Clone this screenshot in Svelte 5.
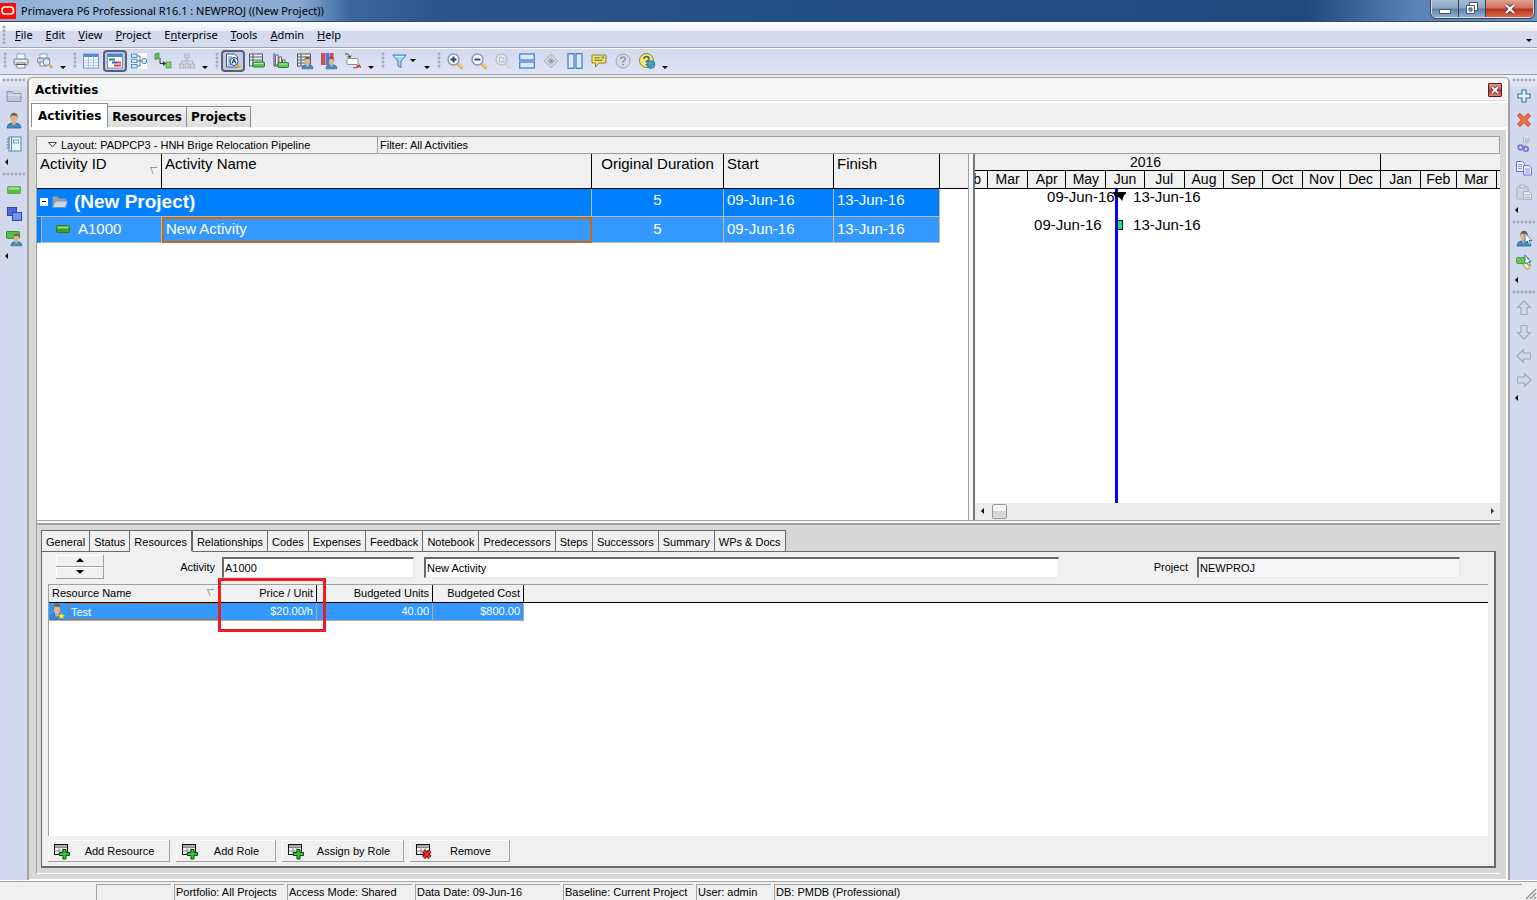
<script>
  const person =
    '<path d="M1 16q0-4 4-5l3 1 3-1q4 1 4 5z" fill="#3f8ec4" stroke="#2468a0" stroke-width=".8"/><path d="M6 9h4v3l-2 1.500-2-1.500z" fill="#d9a878"/><ellipse cx="8" cy="6" rx="3.300" ry="4.300" fill="#e2b48a"/><path d="M4.500 7Q3.500 1 8 .800 12.500 1 11.500 7q0-3-1.500-3.500-2 .500-4 0Q4.500 4 4.500 7z" fill="#6b5f50"/>';
  const smallPerson = `<g transform="translate(4 3) scale(.8)">${person}</g>`;
  const glass = (inner, rim, fill, handle) =>
    `<path d="M10.500 10.500l4.200 4.200" stroke="${handle}" stroke-width="3.200" stroke-linecap="round"/><path d="M10.500 9.700l4.500 4.500" stroke="#fff0c8" stroke-width=".8"/><circle cx="6.500" cy="6.500" r="5.500" fill="${fill}" stroke="${rim}" stroke-width="1.400"/>${inner}`;
  const arrowPath = 'M8 1l6.500 6.500H11V14.500H5V7.500H1.500z';
  const grayArrow = (deg) =>
    `<path transform="rotate(${deg} 8 8)" d="${arrowPath}" fill="#d3d8e4" stroke="#a3a9b9" stroke-width="1.100" stroke-linejoin="round"/>`;
  const greenBar = (x, y, w) =>
    `<rect x="${x}" y="${y}" width="${w}" height="5" rx="1" fill="#5fc552" stroke="#287c2c"/><path d="M${x + 1} ${y + 1.5}h${w - 2}" stroke="#b5f0a5"/>`;
  const pointer = '<path d="M9 3v10l2.300-2 1.700 4 1.700-.8-1.700-3.700h3z" fill="#fff" stroke="#2d6f96" stroke-width=".9"/>';
  const tableGlyph =
    '<rect x=".5" y="1.500" width="13" height="10" fill="#fff" stroke="#111"/><path d="M1 3h12" stroke="#aaa" stroke-width="2"/><path d="M1 4.500h12M1 8h12M5 4v7M9 4v7" stroke="#888"/>';

  const icons = {
    print:
      '<path d="M4 6V1h8v5" fill="#f7fbff" stroke="#7aa6d4"/><rect x="1" y="6" width="14" height="6" rx="1.500" fill="#d2d5da" stroke="#777c86"/><path d="M2 8h12" stroke="#fff"/><path d="M4 10h8v5H4z" fill="#fff" stroke="#7f8793"/><path d="M3 11.500h10" stroke="#555"/>',
    preview:
      '<path d="M3 5V1h7v4" fill="#f7fbff" stroke="#7aa6d4"/><rect x=".5" y="5" width="12" height="5" rx="1.500" fill="#d2d5da" stroke="#777c86"/><path d="M3 9h7v4H3z" fill="#fff" stroke="#7f8793"/><circle cx="9.500" cy="9" r="3.500" fill="#d9efff" stroke="#7b8794"/><path d="M12.500 12l2.500 3" stroke="#dda03f" stroke-width="2.200"/>',
    grid:
      '<rect x=".5" y="1" width="15" height="14" fill="#fff" stroke="#6c94cf"/><path d="M1 2.500h14" stroke="#5b8bd4" stroke-width="3"/><path d="M1 7h14M1 9.700h14M1 12.300h14M5.500 4v11M10.500 4v11" stroke="#a9c3e8"/>',
    gantt:
      '<rect x=".5" y="1" width="15" height="14" fill="#fff" stroke="#6c94cf"/><path d="M1 2.500h14" stroke="#4f82d0" stroke-width="3"/><path d="M2 6.500h6" stroke="#1d8f32" stroke-width="2"/><path d="M5 9.500h5" stroke="#2d55c4" stroke-width="2"/><path d="M10 9.500h4" stroke="#e34234" stroke-width="2"/><path d="M7 12.500h7" stroke="#e34234" stroke-width="2"/>',
    network:
      '<rect width="16" height="16" fill="#fff"/><path d="M6 3h3v10H6M6 8h5" fill="none" stroke="#5b7181"/><rect x=".5" y="1" width="5.500" height="3.500" fill="#cfe9fb" stroke="#4f90b8"/><rect x=".5" y="6.200" width="5.500" height="3.500" fill="#cfe9fb" stroke="#4f90b8"/><rect x=".5" y="11.500" width="5.500" height="3.500" fill="#cfe9fb" stroke="#4f90b8"/><rect x="11" y="5.500" width="4.500" height="5" rx="1.500" fill="#cfe9fb" stroke="#4f90b8"/>',
    trace:
      '<path d="M5 5v5.500h4" fill="none" stroke="#333"/><path d="M8 8l3 2.500-3 2.500z" fill="#333"/><path d="M0 1l4-1v5.500l-4 1z" fill="#5ec24f" stroke="#2c8a33" stroke-width=".7"/><rect x="11" y="9" width="5" height="6" fill="#7ad768" stroke="#2c8a33" stroke-width=".7"/>',
    org:
      '<g fill="#d5d8e1" stroke="#b1b5c0"><path d="M8 5v3M2.500 11V8h11v3M8 8v3" fill="none"/><rect x="6" y="1" width="4" height="4"/><rect x=".5" y="11" width="4" height="4"/><rect x="6" y="11" width="4" height="4"/><rect x="11.500" y="11" width="4" height="4"/></g>',
    find:
      '<path d="M1.500 1h8l3 3v10h-11z" fill="#fff" stroke="#2c5a92"/><path d="M3 4h4M3 6h3M3 8h2M3 10h2M3 12h3" stroke="#4e82bd"/><circle cx="9" cy="8.500" r="4" fill="#eaf5ff" stroke="#26496f"/><path d="M7 10.500l2-4.500 2 4.500M7.700 9h2.600" fill="none" stroke="#234a80" stroke-width="1.100"/><path d="M12 11.500l3 3.200" stroke="#e9a52a" stroke-width="2.600"/>',
    detail:
      '<rect x=".5" y="1" width="13" height="12" fill="#eef0f4" stroke="#555b64"/><path d="M1 4h12M1 7h12M4 1v12" stroke="#555b64"/>' + greenBar(4, 9, 11.5),
    histogram:
      '<path d="M1 0v13h5" fill="none" stroke="#444a55"/><rect x="2.500" y="2" width="2.500" height="10" fill="#fff" stroke="#5c6270"/><rect x="6" y="4" width="2.500" height="8" fill="#fff" stroke="#5c6270"/><rect x="9.500" y="7" width="2.500" height="5" fill="#fff" stroke="#5c6270"/>' + greenBar(5, 9.5, 10.5),
    resTable:
      '<rect x=".5" y="1" width="13" height="12" fill="#eef0f4" stroke="#555b64"/><path d="M1 4h12M1 7h12M1 10h12M4 1v12" stroke="#555b64"/>' + smallPerson,
    resChart:
      '<rect x="0" y="0" width="4" height="12" fill="#d54b4b"/><rect x="4.500" y="0" width="4" height="12" fill="#5277d8"/><rect x="9" y="0" width="3.500" height="9" fill="#d54b4b"/>' + smallPerson,
    relation:
      '<path d="M0 1q4-1 4.500 3M2.500 3l2 2 1.500-2.500" fill="none" stroke="#333"/><rect x="2" y="5.500" width="11" height="6" rx="1" fill="#fff" stroke="#8a8f98"/><path d="M8 14.500q5 1 6-2M11.500 13.500l3-1.500 1 3" fill="none" stroke="#e03030" stroke-width="1.200"/>',
    filter: '<path d="M.8 2h13.400L9 8v6.500l-3-1.500V8z" fill="#a9d3f5" stroke="#3f7db8" stroke-linejoin="round"/><path d="M3 3.500h9" stroke="#e3f4ff"/>',
    zoomIn: glass('<path d="M3.500 6.500h6M6.500 3.500v6" stroke="#243c86" stroke-width="1.800"/>', '#8e98a8', '#eef8ff', '#e8ad55'),
    zoomOut: glass('<path d="M3.500 6.500h6" stroke="#243c86" stroke-width="1.800"/>', '#8e98a8', '#eef8ff', '#e8ad55'),
    zoomFit: glass('<path d="M4.500 4.500h3l1.500 1.500v3h-4.500z" fill="none" stroke="#b3b7c2"/>', '#bcc0ca', '#e2e5ee', '#cfd2da'),
    rows:
      '<g fill="#d7ecfc" stroke="#3f78cf" stroke-width="1.200"><rect x=".7" y="1" width="14.600" height="6"/><rect x=".7" y="9" width="14.600" height="6"/></g>',
    columns:
      '<g fill="#d7ecfc" stroke="#3f78cf" stroke-width="1.200"><rect x="1" y=".7" width="6" height="14.600"/><rect x="9" y=".7" width="6" height="14.600"/></g>',
    diamond:
      '<path d="M8 1l7 7-7 7-7-7z" fill="#d0d4df" stroke="#acb1be"/><path d="M8 4.500v7M4.500 8h7M6 6l4 4M10 6l-4 4" stroke="#8f95a3" stroke-width=".9"/>',
    note:
      '<path d="M1 2h14v8H8l-3.500 4V10H1z" fill="#f1e65a" stroke="#8d8330"/><path d="M3.500 4.800h5M3.500 7.300h8" stroke="#6a7f70" stroke-width="1.200"/><rect x="10.500" y="3.500" width="2.500" height="2" fill="#5d82c0"/>',
    help: '<circle cx="8" cy="8" r="7" fill="#d9dce6" stroke="#a1a6b2"/><path d="M5.700 6.300q0-2.300 2.300-2.300t2.300 2q0 1.200-2.300 2.500v1.200M8 11v1.500" fill="none" stroke="#8d93a2" stroke-width="1.500"/>',
    helpWeb:
      '<circle cx="7.500" cy="7.500" r="7" fill="#f7ee62" stroke="#7e7b43"/><path d="M5 6q0-2.500 2.500-2.500T10 6q0 1.200-2.500 2.300v1.500M7.500 11v1.500" fill="none" stroke="#3a57b0" stroke-width="1.500"/><circle cx="12" cy="11.500" r="4" fill="#3f8fd6" stroke="#2b66a5" stroke-width=".6"/><path d="M9.500 9.500l3-1 .5 2-2 1.500zM12 13l2.500-1.500 1 1-2 2.500z" fill="#4fc05a"/>',
    folder: '<path d="M1 13.500V3.500h5l1.500 2h7.500v8z" fill="#bfcbdc" stroke="#8393ad"/><path d="M1.500 7h13" stroke="#e9eff7"/>',
    folderOpen:
      '<path d="M.5 12.500V2.500h5l1.500 2h7v3" fill="#8ba3bd" stroke="#6b86a3"/><path d="M.5 13.500l2.500-6.500h12.500l-2 6.500z" fill="#c9d7e6" stroke="#7690ab"/>',
    person,
    book:
      '<rect x="3" y="1" width="12" height="14" fill="#e8f3fb" stroke="#4d8cba"/><path d="M5.500 1v14" stroke="#4d8cba"/><rect x="7.500" y="4" width="5" height="3" fill="#fff" stroke="#4d8cba" stroke-width=".8"/><path d="M.5 3h3.500M.5 6h3.500M.5 9h3.500M.5 12h3.500" stroke="#5f7f99" stroke-width="1.200"/>',
    bar: '<rect x="1.500" y="4.500" width="13" height="7" rx="1" fill="#55bd3f" stroke="#66a565"/><path d="M2.500 6.500h11" stroke="#a6e88f" stroke-width="2"/>',
    task: '<rect x="1.500" y="4.500" width="13" height="7" rx="1" fill="#3f9f2b" stroke="#2a7a1c"/><path d="M2.500 6.500h11" stroke="#8ddc6c" stroke-width="2"/>',
    squares: '<rect x="1.500" y="1.500" width="9" height="8" fill="#5266e0" stroke="#3346b8"/><rect x="6.500" y="6.500" width="9" height="8" fill="#6f97f0" stroke="#3346b8"/>',
    barPerson: `<rect x=".5" y="1.500" width="13" height="7" rx="1" fill="#55bd3f" stroke="#3c8a39"/>${smallPerson}`,
    add: '<path d="M6 2h4v4h4v4h-4v4H6v-4H2V6h4z" fill="#e2f4fb" stroke="#417e99" stroke-width="1.200"/>',
    del: '<path d="M1.500 3.500l2.500-2 4 4 4-4 2.500 2.500-4 4 4 4-2.500 2.500-4-4-4 4-2.500-2.500 4-4z" fill="#f2714f" stroke="#c13a20"/>',
    cut:
      '<path d="M8 1l1 9M13 2.500L7.500 10" stroke="#a2a6b0" stroke-width="2.200"/><path d="M8 1l1 8M12.700 3L8 9.500" stroke="#f4f4f6" stroke-width=".8"/><circle cx="4.500" cy="11.500" r="2.300" fill="none" stroke="#7672dd" stroke-width="1.700"/><circle cx="10" cy="13" r="2.200" fill="none" stroke="#7672dd" stroke-width="1.700"/>',
    copy:
      '<g fill="#edf0ff" stroke="#6c74dc"><path d="M.5 1.500h6l2 2v8h-8z"/><path d="M7.500 5.500h5.500l2.500 2.500v7h-8z"/></g><path d="M2 4.500h4M2 6.500h4M2 8.500h4M9 9h5M9 11h5M9 13h5" stroke="#8e97e8"/>',
    paste:
      '<rect x="1" y="2.500" width="11" height="12.500" rx="1" fill="#ced3df" stroke="#a9afbd"/><rect x="4" y="1" width="5" height="3" fill="#dfe2ea" stroke="#a9afbd"/><path d="M7.500 7.500h5.500l2.500 2.500v5.500h-8z" fill="#e5e8f0" stroke="#a9afbd"/><path d="M9 11h5M9 13.500h5" stroke="#a9afbd"/>',
    personPick: person + pointer,
    barPick: '<rect x=".5" y="3.500" width="12" height="6" rx="1" fill="#68c653" stroke="#4c9b45"/><path d="M8 8.500h4l3 3-3.500 4-4.500-4z" fill="#f6ef84" stroke="#9c9650"/><path d="M9 1v9l2-1.500 1.500 3 1.500-.7-1.500-3h2.500z" fill="#fff" stroke="#2d6f96" stroke-width=".9"/>',
    up: grayArrow(0),
    down: grayArrow(180),
    left: grayArrow(270),
    right: grayArrow(90),
    tableAdd: tableGlyph + '<path d="M9 6.500h3v3h3.500v3H12V16H9v-3.500H5.500v-3H9z" fill="#36c436" stroke="#064d0a"/>',
    tableDel: tableGlyph + '<path d="M7.500 8l6.500 6.500M14 8l-6.500 6.500" stroke="#5e0c0c" stroke-width="4"/><path d="M7.500 8l6.500 6.500M14 8l-6.500 6.500" stroke="#f03030" stroke-width="2.400"/>',
    personStar: person + '<path d="M12.500 9.500l1.200 2.200 2.300.3-1.700 1.700.4 2.300-2.200-1.100-2 1.100.3-2.300L9 12l2.300-.3z" fill="#ffe93b" stroke="#a98c10" stroke-width=".4"/>'
  };

  const menus = [
    ['', 'F', 'ile'], ['', 'E', 'dit'], ['', 'V', 'iew'], ['', 'P', 'roject'],
    ['E', 'n', 'terprise'], ['', 'T', 'ools'], ['', 'A', 'dmin'], ['', 'H', 'elp']
  ];
  const toolGroups = [
    ['print', 'preview'],
    ['grid', 'gantt', 'network', 'trace', 'org'],
    ['find', 'detail', 'histogram', 'resTable', 'resChart', 'relation'],
    ['filter'],
    ['zoomIn', 'zoomOut', 'zoomFit', 'rows', 'diamond', 'columns', 'note', 'help', 'helpWeb']
  ];
  const pressed = ['gantt', 'find'];
  const leftGroups = [['folder', 'person', 'book'], ['bar', 'squares', 'barPerson']];
  const rightGroups = [['add', 'del', 'cut', 'copy', 'paste'], ['personPick', 'barPick'], ['up', 'down', 'left', 'right']];

  const detailTabs = ['General', 'Status', 'Resources', 'Relationships', 'Codes', 'Expenses', 'Feedback', 'Notebook', 'Predecessors', 'Steps', 'Successors', 'Summary', 'WPs & Docs'];
  let activeTab = $state('Resources');
  let activityId = $state('A1000');
  let activityName = $state('New Activity');

  // The visible range opens in late February 2016; cells outside it carry no label.
  const dayWidth = 1.2843;
  const months = [
    ['', 31], ['Feb', 29], ['Mar', 31], ['Apr', 30], ['May', 31], ['Jun', 30], ['Jul', 31], ['Aug', 31],
    ['Sep', 30], ['Oct', 31], ['Nov', 30], ['Dec', 31], ['Jan', 31], ['Feb', 28], ['Mar', 31], ['', 30]
  ];
  const commands = [
    ['Add Resource', 'tableAdd', true], ['Add Role', 'tableAdd', false],
    ['Assign by Role', 'tableAdd', true], ['Remove', 'tableDel', false]
  ];
</script>

{#snippet icon(name)}
  <svg class="icon" viewBox="0 0 16 16" width="16" height="16" fill="none" aria-hidden="true">{@html icons[name]}</svg>
{/snippet}

{#snippet sideBar(groups, label)}
  <nav class="side" aria-label={label}>
    {#each groups as group}
      <div class="side-group">
        <span class="grip-h"></span>
        {#each group as name}
          <button class="tool" aria-label={name}>{@render icon(name)}</button>
        {/each}
        <button class="more-v" aria-label="More"><span class="tri-left"></span></button>
      </div>
    {/each}
  </nav>
{/snippet}

<div class="app">
  <header class="titlebar">
    <svg class="logo" viewBox="0 0 16 16" width="16" height="16" aria-hidden="true">
      <rect width="16" height="16" fill="#fb0d07" />
      <rect x="2" y="4" width="11.500" height="7" rx="3" fill="none" stroke="#fff" stroke-width="1.600" />
    </svg>
    <span class="title">Primavera P6 Professional R16.1 : NEWPROJ ((New Project))</span>
    <div class="window-buttons">
      <button aria-label="Minimize"><svg width="14" height="12"><rect x="1.500" y="6.500" width="11" height="4" fill="#fff" stroke="#46566c" /></svg></button>
      <button aria-label="Restore"><svg width="14" height="13"><path d="M4.500.5h8v8h-8z" fill="#fff" stroke="#46566c" /><path d="M1.500 3.500h8v8h-8z" fill="#fff" stroke="#46566c" /><path d="M4 6h3v3H4z" fill="#8ca4c0" stroke="#46566c" /></svg></button>
      <button class="close" aria-label="Close"><svg width="14" height="12"><path d="M3 2l8 8M11 2l-8 8" stroke="#5b3030" stroke-width="4" /><path d="M3 2l8 8M11 2l-8 8" stroke="#fff" stroke-width="2.400" /></svg></button>
    </div>
  </header>

  <nav class="menubar" aria-label="Menu">
    <span class="grip"></span>
    {#each menus as [pre, key, rest]}
      <button class="menu">{pre}<u>{key}</u>{rest}</button>
    {/each}
    <span class="tri menu-more"></span>
  </nav>

  <div class="toolbar">
    {#each toolGroups as group}
      <div class="tool-group">
        <span class="grip"></span>
        {#each group as name}
          <button class="tool" class:pressed={pressed.includes(name)} class:wide={name === 'filter'} aria-label={name}>
            {@render icon(name)}{#if name === 'filter'}<span class="tri"></span>{/if}
          </button>
        {/each}
        <button class="more" aria-label="More"><span class="tri"></span></button>
      </div>
    {/each}
  </div>

  <div class="workspace">
    {@render sideBar(leftGroups, 'Directory')}

    <main>
      <div class="heading">
        <h1>Activities</h1>
        <button class="close-view" aria-label="Close view"><svg width="8" height="8"><path d="M1 1l6 6M7 1l-6 6" stroke="#4a2a30" stroke-width="3" /><path d="M1 1l6 6M7 1l-6 6" stroke="#fff" stroke-width="1.800" /></svg></button>
      </div>
      <div class="view-tabs">
        <button class="current">Activities</button><button>Resources</button><button>Projects</button>
      </div>

      <div class="body">
        <section class="top-pane">
          <div class="layout-bar">
            <button class="layout-name">
              <svg width="9" height="6"><path d="M.5.5h8L4.500 5z" fill="#fff" stroke="#444" /></svg>
              Layout: PADPCP3 - HNH Brige Relocation Pipeline
            </button>
            <span>Filter: All Activities</span>
          </div>
          <div class="split">
            <div class="grid-pane">
              <table class="activities">
                <colgroup><col class="c-id" /><col class="c-name" /><col class="c-dur" /><col class="c-start" /><col class="c-fin" /><col /></colgroup>
                <thead>
                  <tr>
                    <th><div class="sortable"><span>Activity ID</span><svg width="8" height="8"><path d="M.5.5h7M.5.5l3 7" stroke="#999" fill="none" /><path d="M7.500.5l-4 7" stroke="#fff" /></svg></div></th>
                    <th>Activity Name</th><th class="center">Original Duration</th><th>Start</th><th>Finish</th><th></th>
                  </tr>
                </thead>
                <tbody>
                  <tr class="project">
                    <td colspan="2"><div class="cell"><span class="toggle"></span>{@render icon('folderOpen')}<b>(New Project)</b></div></td>
                    <td class="center">5</td><td>09-Jun-16</td><td>13-Jun-16</td><td class="blank"></td>
                  </tr>
                  <tr class="activity">
                    <td class="indent"><div class="cell">{@render icon('task')}<span>A1000</span></div></td>
                    <td class="focused">New Activity</td>
                    <td class="center">5</td><td>09-Jun-16</td><td>13-Jun-16</td><td class="blank"></td>
                  </tr>
                </tbody>
              </table>
            </div>
            <div class="gantt">
              <div class="timescale">
                <div class="track years">
                  <span style="width:{366 * dayWidth}px">2016</span><span style="width:{365 * dayWidth}px"></span>
                </div>
                <div class="track months">
                  {#each months as [name, days]}<span style="width:{days * dayWidth}px">{name}</span>{/each}
                </div>
              </div>
              <div class="canvas">
                <span class="date summary-start">09-Jun-16</span>
                <span class="date summary-finish">13-Jun-16</span>
                <span class="date task-start">09-Jun-16</span>
                <span class="date task-finish">13-Jun-16</span>
                <span class="data-line"></span>
                <svg class="summary" width="14" height="10"><path d="M0 0h13v2l-2 1-2 6-2-3-2-1H2z" fill="#000" /></svg>
                <span class="task"></span>
              </div>
              <div class="scroll">
                <span class="tri-left"></span><span class="thumb"></span><span class="tri-right"></span>
              </div>
            </div>
          </div>
        </section>

        <section class="details">
          <div class="detail-tabs">
            {#each detailTabs as tab}
              <button class:current={tab === activeTab} onclick={() => (activeTab = tab)}>{tab}</button>
            {/each}
          </div>
          <div class="detail-body">
            <div class="form">
              <div class="spin">
                <button aria-label="Previous"><span class="tri-up"></span></button>
                <button aria-label="Next"><span class="tri"></span></button>
              </div>
              <label for="activity-id">Activity</label>
              <input id="activity-id" class="f-id" bind:value={activityId} />
              <input class="f-name" aria-label="Activity name" bind:value={activityName} />
              <label for="project-id" class="l-project">Project</label>
              <input id="project-id" class="f-project" value="NEWPROJ" readonly />
            </div>
            <div class="resource-list">
              <table class="resources">
                <colgroup><col class="r-name" /><col class="r-price" /><col class="r-units" /><col class="r-cost" /><col /></colgroup>
                <thead>
                  <tr>
                    <th class="first"><div class="sortable"><span>Resource Name</span><svg width="8" height="8"><path d="M.5.5h7M.5.5l3 7" stroke="#999" fill="none" /><path d="M7.500.5l-4 7" stroke="#fff" /></svg></div></th>
                    <th class="num marked">Price / Unit<span class="marker"></span></th>
                    <th class="num">Budgeted Units</th><th class="num">Budgeted Cost</th><th class="rest"></th>
                  </tr>
                </thead>
                <tbody>
                  <tr>
                    <td class="first"><div class="res">{@render icon('personStar')}<span>Test</span></div></td>
                    <td class="num">$20.00/h</td><td class="num">40.00</td><td class="num">$800.00</td><td class="rest"></td>
                  </tr>
                </tbody>
              </table>
            </div>
            <div class="commands">
              {#each commands as [label, glyph, large]}
                <button class:large>{@render icon(glyph)}<span>{label}</span></button>
              {/each}
            </div>
          </div>
        </section>
      </div>
    </main>

    {@render sideBar(rightGroups, 'Edit')}
  </div>

  <footer>
    <span class="s-blank"></span>
    <span class="s-portfolio">Portfolio: All Projects</span>
    <span class="s-access">Access Mode: Shared</span>
    <span class="s-date">Data Date: 09-Jun-16</span>
    <span class="s-base">Baseline: Current Project</span>
    <span class="s-user">User: admin</span>
    <span class="s-db">DB: PMDB (Professional)</span>
    <svg class="resize" width="12" height="12"><path d="M11 1L1 11M11 5l-6 6M11 9l-2 2" stroke="#999" stroke-width="1.500" /></svg>
  </footer>
</div>

<style>
  :global(body) { margin: 0; }
  * { box-sizing: border-box; }
  button { border: 0; padding: 0; margin: 0; background: none; color: inherit; font: inherit; }
  .app { display: flex; flex-direction: column; min-height: 100vh; font: 11px/14px "Liberation Sans", Arial, sans-serif; color: #000; background: #f0f0f0; }
  .icon { display: block; flex: none; overflow: visible; }

  .tri, .tri-up { width: 0; height: 0; border: solid transparent; border-width: 3px 3px 0; border-top-color: #000; }
  .tri-up { border-width: 0 4px 4px; border-bottom-color: #000; }
  .tri-left { width: 0; height: 0; border: solid transparent; border-width: 3px 3px 3px 0; border-right-color: #000; }
  .tri-right { width: 0; height: 0; border: solid transparent; border-width: 3px 0 3px 3px; border-left-color: #333; }

  .titlebar { display: flex; align-items: center; height: 22px; padding-right: 3px; border-bottom: 1px solid #2b4a70;
    background: linear-gradient(90deg, #8fb0d5 0, #a0bcdc 120px, #86a8d0 300px, #3a679d 350px, #2b568c 440px, #235087 50%, #1f4a7c 85%, #5b83b3 92%, #6e93bf 100%); }
  .logo { flex: none; }
  .title { flex: 1; padding-left: 5px; font: 11px/20px "Noto Sans", "Segoe UI", sans-serif; white-space: nowrap; }
  .window-buttons { display: flex; align-self: flex-start; height: 18px; border: 1px solid #d3deea; border-top: 0; border-radius: 0 0 5px 5px; overflow: hidden; outline: 1px solid #33435a; }
  .window-buttons button { display: flex; align-items: center; justify-content: center; width: 27px; border-right: 1px solid #33435a; background: linear-gradient(#a8bdd5, #8aa5c4 48%, #5f7fa5 52%, #8fb0d2); }
  .window-buttons .close { width: 47px; border: 0; background: linear-gradient(#e0a091, #d0705b 48%, #b5311c 52%, #d9694a); }

  .menubar { display: flex; align-items: center; gap: 1px; height: 26px; padding-right: 5px; border-bottom: 1px solid #a0a3aa; background: linear-gradient(#fff, #e9edf8 35%, #d3d9ee 38%, #d7dcf0); font: 11px/16px "Noto Sans", "Segoe UI", sans-serif; }
  .menu { padding: 0 6px; }
  .menu-more { margin-left: auto; align-self: flex-end; margin-bottom: 5px; }
  .grip { align-self: stretch; width: 8px; margin: 3px 0; background: radial-gradient(circle at 4px 2px, #a9adb8 1px, transparent 2px) 0 0 / 8px 4px; }
  .grip-h { align-self: stretch; height: 8px; margin: 0 2px; background: radial-gradient(circle at 2px 4px, #a9adb8 1px, transparent 2px) 0 0 / 4px 8px; }

  .toolbar { display: flex; gap: 2px; height: 27px; padding: 0 0 2px 1px; border-top: 1px solid #fff; border-bottom: 1px solid #9c9fa6; background: linear-gradient(#d3d9ee, #dfe4f5); }
  .tool-group { display: flex; align-items: center; }
  .tool { display: flex; flex: none; align-items: center; justify-content: center; width: 24px; height: 24px; }
  .pressed { height: 22px; border: 2px solid #596077; border-radius: 4px; background: #c3cadf; }
  .wide { width: 34px; gap: 2px; justify-content: flex-start; padding-left: 5px; }
  .more { display: flex; align-items: flex-end; justify-content: center; align-self: stretch; width: 12px; padding-bottom: 3px; }

  .workspace { display: flex; flex: 1; }
  .side { flex: none; display: flex; flex-direction: column; gap: 2px; width: 27px; padding-top: 1px; background: linear-gradient(#eef1fa, #d3d9ec 16px); }
  .side-group { display: flex; flex-direction: column; align-items: center; }
  .more-v { display: flex; align-items: center; align-self: stretch; height: 12px; padding-left: 5px; }

  main { flex: 1; display: flex; flex-direction: column; min-width: 0; margin-top: 2px; border: 1px solid #a0a3a8; border-right: 2px solid #a0a3a8; border-radius: 5px 5px 0 0; border-left-width: 2px; background: #fff; }
  .heading { display: flex; align-items: center; justify-content: space-between; height: 23px; margin: 0 2px; padding: 1px 4px 0; border-bottom: 1px solid #d5dde6; background: #f6f6f6; }
  h1 { margin: 0; font: bold 12px/22px "DejaVu Sans", Tahoma, sans-serif; }
  .close-view { display: flex; align-items: center; justify-content: center; width: 14px; height: 14px; border: 1px solid #571b24; border-radius: 1px; background: linear-gradient(#e29a8d, #c04b3f 50%, #b53a30 55%, #e08272); }
  .view-tabs { display: flex; align-items: flex-end; height: 26px; margin: 2px 0 1px 2px; border-bottom: 2px solid #fff; background: #f0f0f0; font: bold 12px/18px "DejaVu Sans", Tahoma, sans-serif; }
  .view-tabs button { height: 21px; padding: 0 4px; border: 1px solid #8c8c8c; border-left: 0; border-bottom: 0; background: linear-gradient(#f2f2f2, #dcdcdc); }
  .view-tabs .current { height: 24px; padding: 0 6px; background: #fff; border-left: 1px solid #8c8c8c; }

  .body { flex: 1; display: flex; flex-direction: column; padding: 6px 6px 5px 7px; border: solid #fff; border-width: 0 2px 1px 0; background: #d7d7d7; }
  .top-pane { flex: 388 1 0; display: flex; flex-direction: column; border-bottom: 2px solid #a0a0a0; border-left: 1px solid #a0a0a0; background: #f8f8f8; padding-bottom: 2px; }
  .layout-bar { display: flex; height: 18px; border: 1px solid #a0a0a0; border-left: 0; background: #f0f0f0; line-height: 16px; }
  .layout-name { display: flex; align-items: center; gap: 4px; width: 341px; padding-left: 11px; border-right: 1px solid #a0a0a0; }
  .layout-bar > span { padding-left: 2px; }
  .split { flex: 1; display: flex; gap: 4px; border-bottom: 1px solid #a0a0a0; }
  .grid-pane { flex: 933 1 0; background: #fff; border-right: 1px solid #a0a0a0; }
  .gantt { flex: 526 1 0; display: flex; flex-direction: column; min-width: 0; border-left: 2px solid #777; background: #fff; }

  table { border-collapse: separate; border-spacing: 0; table-layout: fixed; width: 100%; }
  th, td { padding: 0 3px; text-align: left; font-weight: normal; white-space: nowrap; overflow: hidden; }
  .activities { font-size: 15px; line-height: 20px; }
  .c-id { width: 125px; } .c-name { width: 430px; } .c-dur { width: 132px; } .c-start { width: 110px; } .c-fin { width: 106px; }
  .activities th { height: 35px; vertical-align: top; background: #f0f0f0; border-right: 1px solid #000; border-bottom: 1px solid #000; }
  .activities th:last-child { border-right: 0; }
  .sortable { display: flex; justify-content: space-between; }
  .activities .sortable svg { margin-top: 13px; }
  .center { text-align: center !important; }
  .activities td { color: #fff; border-right: 1px solid #c0b8a8; border-bottom: 1px solid #c0b8a8; }
  .project td { height: 28px; padding-bottom: 6px; background: #0080ff; }
  .project td:first-child { padding-bottom: 2px; }
  .activity td { height: 24px; padding-bottom: 2px; background: #39f; }
  .activities .blank { background: #fff; border: 0; }
  .cell { display: flex; align-items: center; gap: 5px; }
  .project b { font-size: 19px; padding-left: 1px; }
  .toggle { width: 8px; height: 8px; margin-right: -1px; background: linear-gradient(#000, #000) center / 4px 1px no-repeat #fff; }
  .activities .indent { padding: 0 0 2px 14px; border-left: 4px solid #0080ff; box-shadow: inset 1px 0 #a9b4c0; }
  .indent .cell { gap: 7px; }
  .activities .focused { border: 2px solid #c8690f; padding: 0 3px 2px 2px; }

  .timescale { overflow: hidden; flex: none; height: 35px; border-bottom: 1px solid #000; background: #f0f0f0; font-size: 14px; }
  .track { display: flex; margin-left: -64px; }
  .track span { flex: none; border-right: 1px solid #000; text-align: center; height: 17px; line-height: 17px; }
  .years span { border-bottom: 1px solid #000; }
  .canvas { position: relative; flex: 1; font-size: 15px; line-height: 18px; }
  .date { position: absolute; white-space: nowrap; }
  .summary-start { left: 72px; top: -1px; }
  .summary-finish { left: 158px; top: -1px; }
  .task-start { left: 59px; top: 27px; }
  .task-finish { left: 158px; top: 27px; }
  .data-line { position: absolute; left: 140px; top: 0; bottom: 0; width: 3px; background: #00f; }
  .summary { position: absolute; left: 138px; top: 3px; }
  .task { position: absolute; left: 142px; top: 31px; width: 6px; height: 10px; border: 1px solid #000; background: #00f080; }
  .scroll { display: flex; align-items: center; height: 17px; padding: 0 6px; background: #ececec; }
  .scroll .thumb { width: 15px; height: 15px; margin-left: 8px; border: 1px solid #979797; border-radius: 2px; background: linear-gradient(#f4f4f4 45%, #d5d5d8 50%, #dcdcdf); }
  .scroll .tri-right { margin-left: auto; }

  .details { flex: 341 1 0; display: flex; flex-direction: column; padding: 5px 4px 5px 4px; border-bottom: 1px solid #fff; border-left: 1px solid #a0a0a0; }
  .detail-tabs { display: flex; position: relative; margin-bottom: -1px; }
  .detail-tabs button { height: 22px; padding: 2px 4px 0; border: 1px solid #696969; border-left: 0; background: #f0f0f0; }
  .detail-tabs button:first-child { border-left: 1px solid #696969; }
  .detail-tabs .current { border-bottom-color: #f0f0f0; border-right-width: 2px; }
  .detail-body { flex: 1; display: flex; flex-direction: column; padding: 3px 6px 4px 6px; border: 1px solid #696969; border-right-width: 2px; border-bottom-width: 2px; background: #f0f0f0; }
  .form { display: flex; align-items: flex-start; height: 29px; padding: 0 28px 0 8px; }
  .spin { display: flex; flex-direction: column; width: 48px; }
  .spin button { display: flex; align-items: center; justify-content: center; height: 12px; border: solid #a0a0a0; border-width: 0 1px 1px 0; box-shadow: inset 1px 1px #fff; }
  .spin .tri { border-width: 4px 4px 0; }
  .form label { width: 118px; padding: 5px 7px 0 0; text-align: right; }
  .form .l-project { width: 138px; padding-right: 9px; }
  input { height: 21px; min-width: 0; margin: 2px 0 0; padding: 0 1px; border: solid; border-width: 2px 1px 1px 2px; border-color: #696969 #e8e8e8 #e8e8e8 #696969; border-radius: 0; background: #fff; font: inherit; color: inherit; outline: 0; }
  .f-id { width: 192px; }
  .f-name { flex: 1; margin-left: 10px; }
  .f-project { width: 263px; background: #f6f6f6; }
  .resource-list { flex: 1; border: solid #a0a0a0; border-width: 1px 0 0 1px; background: #fff; }
  .r-name { width: 169px; } .r-price { width: 99px; } .r-units { width: 116px; } .r-cost { width: 91px; }
  .resources th { height: 18px; padding-bottom: 1px; background: #f0f0f0; border-right: 1px solid #000; border-bottom: 1px solid #000; }
  .resources th.first { border-right: 0; }
  .resources .sortable { align-items: center; }
  .resources th.rest { border-right: 0; }
  .resources .num { text-align: right; }
  .marked { position: relative; overflow: visible; }
  .marker { position: absolute; left: 0; top: -7px; width: 108px; height: 54px; border: 3px solid #ed1c24; }
  .resources td { height: 18px; color: #fff; background: #39f; border-right: 1px solid #b8a898; border-bottom: 1px solid #b8a898; }
  .resources td.first { padding: 0; border-right: 0; }
  .resources td.rest { background: none; border: 0; }
  .res { display: flex; height: 17px; }
  .res span { flex: 1; margin-left: 3px; padding-left: 2px; border: 1px solid #b0742e; border-right: 0; line-height: 16px; }
  .commands { display: flex; gap: 6px; padding-top: 4px; }
  .commands button { display: flex; align-items: center; width: 100px; height: 22px; padding-left: 6px; border: solid #a0a0a0; border-width: 0 1px 1px 0; box-shadow: inset 1px 1px #fff; }
  .commands .large { width: 122px; }
  .commands span { flex: 1; text-align: center; }

  footer { display: flex; gap: 3px; flex: none; height: 19px; padding: 2px 0 0 96px; border-top: 1px solid #a0a0a0; background: #f0f0f0; box-shadow: 0 -1px #fff; line-height: 14px; white-space: nowrap; }
  footer span { flex: none; padding-left: 1px; border: solid #a0a0a0; border-width: 1px 0 0 1px; }
  .s-blank { width: 75px; } .s-portfolio { width: 110px; } .s-access { width: 125px; } .s-date { width: 145px; } .s-base { width: 130px; } .s-user { width: 75px; }
  .s-db { flex: 1 !important; }
  .resize { align-self: flex-end; }
</style>
